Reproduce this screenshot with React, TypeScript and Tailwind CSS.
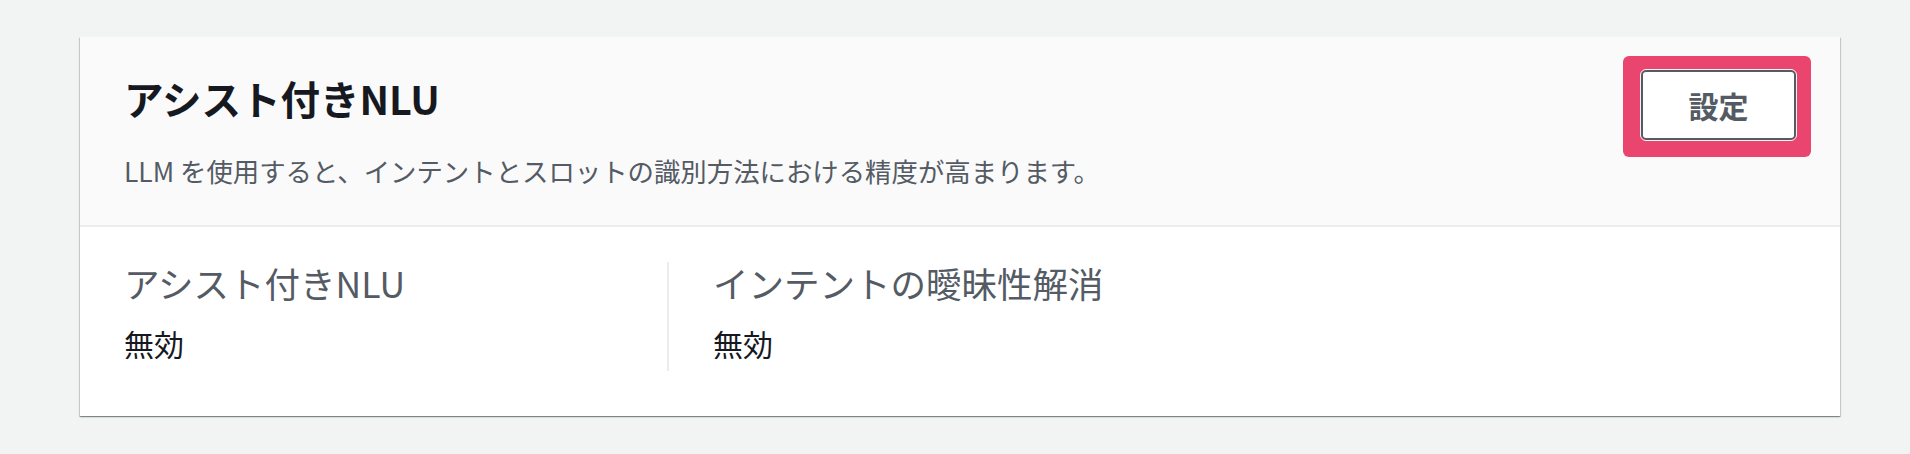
const FONT = "font-['Noto_Sans_CJK_JP','Noto_Sans',sans-serif]";

type Setting = {
  label: string;
  value: string;
};

const SETTINGS: Setting[] = [
  { label: 'アシスト付きNLU', value: '無効' },
  { label: 'インテントの曖昧性解消', value: '無効' },
];

export default function App() {
  return (
    <div className={`min-h-[454px] w-full bg-[#f2f3f3] pt-[37px] pl-[80px] ${FONT}`}>
      <div className="w-[1760px] bg-white shadow-[0_1px_1px_0_rgba(0,28,36,0.3),1px_1px_1px_0_rgba(0,28,36,0.15),-1px_1px_1px_0_rgba(0,28,36,0.15)]">
        {/* header */}
        <div className="flex items-start justify-between border-b-2 border-[#eaeded] bg-[#fafafa] pl-[44px] pr-[29px] pt-[38px] pb-[36px]">
          <div>
            <h2 className="text-[39.5px] font-bold leading-[46px] text-[#16191f]">アシスト付きNLU</h2>
            <p className="mt-[32px] text-[26.4px] leading-[36px] text-[#545b64]">
              LLM を使用すると、インテントとスロットの識別方法における精度が高まります。
            </p>
          </div>
          {/* highlighted action */}
          <div className="-mt-[19px] rounded-[6px] bg-[#e9456e] pt-[14px] pb-[17px] pl-[18px] pr-[15px]">
            <button className="h-[70px] w-[155px] rounded-[5px] border-2 border-[#545b64] bg-white text-[30px] font-bold leading-none text-[#545b64] outline outline-1 outline-[#f5f5f5]">
              設定
            </button>
          </div>
        </div>

        {/* body */}
        <div className="flex pl-[44px] pt-[35px] pb-[45px]">
          {SETTINGS.map((s, i) => (
            <div
              key={s.label}
              className={
                i === 0
                  ? 'w-[543px] pb-[9px]'
                  : 'border-l-2 border-[#eaeded] pl-[44px] pb-[9px]'
              }
            >
              <div className="text-[35.5px] leading-[42px] text-[#545b64]">{s.label}</div>
              <div className="mt-[20px] text-[30px] leading-[38px] text-[#16191f]">{s.value}</div>
            </div>
          ))}
        </div>
      </div>
    </div>
  );
}
